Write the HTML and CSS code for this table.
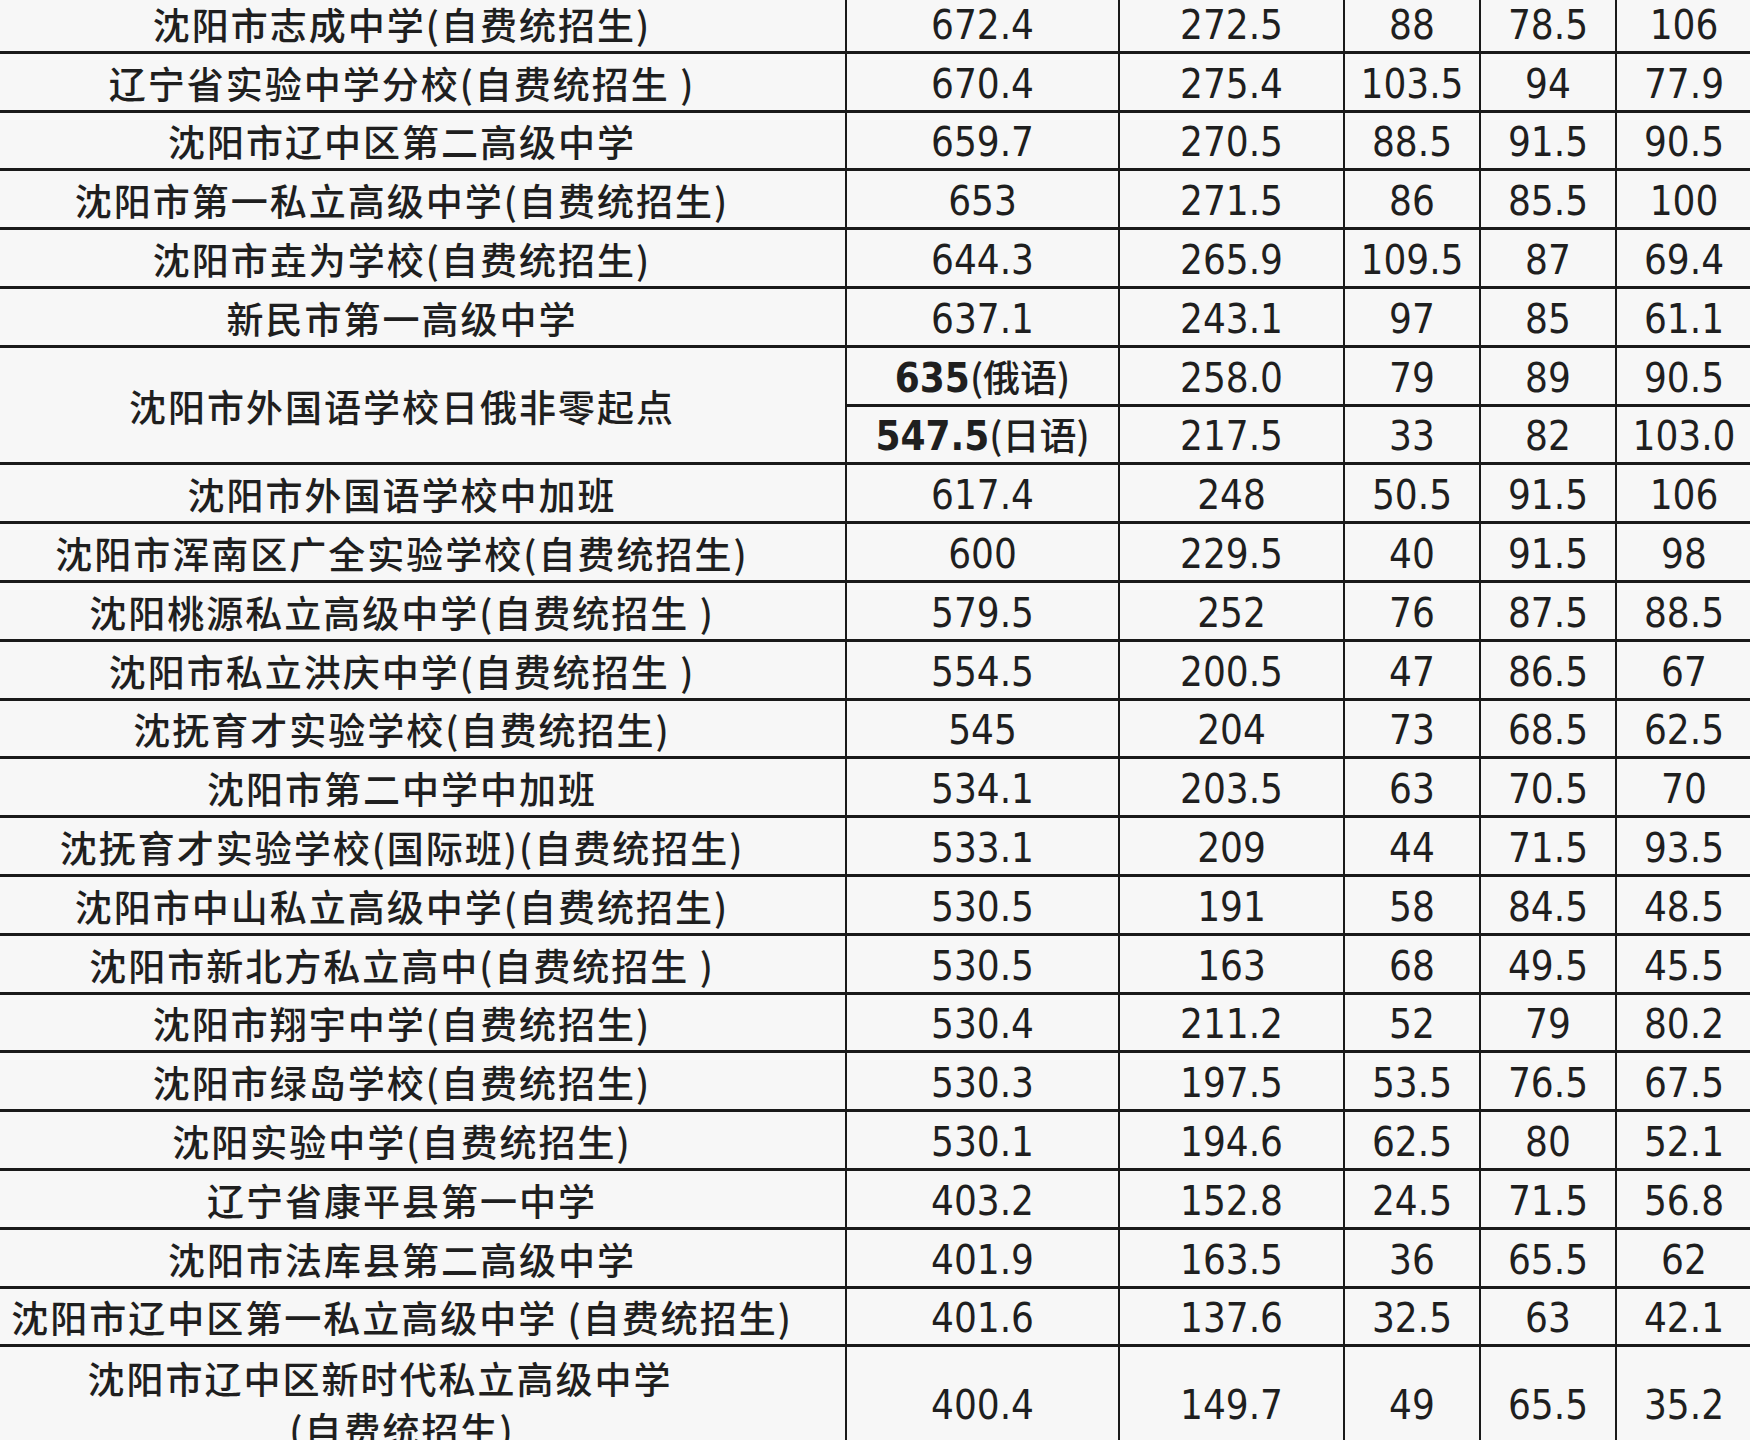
FILE: index.html
```html
<!DOCTYPE html>
<html lang="zh-CN">
<head>
<meta charset="utf-8">
<title>沈阳市高中录取分数</title>
<link rel="stylesheet" href="styles.css">
</head>
<body>
<table class="scores">
  <colgroup>
    <col class="c-name"><col class="c-total"><col class="c-a"><col class="c-b"><col class="c-c"><col class="c-d">
  </colgroup>
  <tbody>
    <tr><td class="name">沈阳市志成中学(自费统招生)</td><td>672.4</td><td>272.5</td><td>88</td><td>78.5</td><td>106</td></tr>
    <tr><td class="name">辽宁省实验中学分校(自费统招生 )</td><td>670.4</td><td>275.4</td><td>103.5</td><td>94</td><td>77.9</td></tr>
    <tr><td class="name">沈阳市辽中区第二高级中学</td><td>659.7</td><td>270.5</td><td>88.5</td><td>91.5</td><td>90.5</td></tr>
    <tr><td class="name">沈阳市第一私立高级中学(自费统招生)</td><td>653</td><td>271.5</td><td>86</td><td>85.5</td><td>100</td></tr>
    <tr><td class="name">沈阳市垚为学校(自费统招生)</td><td>644.3</td><td>265.9</td><td>109.5</td><td>87</td><td>69.4</td></tr>
    <tr><td class="name">新民市第一高级中学</td><td>637.1</td><td>243.1</td><td>97</td><td>85</td><td>61.1</td></tr>
    <tr><td class="name" rowspan="2">沈阳市外国语学校日俄非零起点</td><td><b class="strong">635</b><span class="lang">(俄语)</span></td><td>258.0</td><td>79</td><td>89</td><td>90.5</td></tr>
    <tr><td><b class="strong">547.5</b><span class="lang">(日语)</span></td><td>217.5</td><td>33</td><td>82</td><td>103.0</td></tr>
    <tr><td class="name">沈阳市外国语学校中加班</td><td>617.4</td><td>248</td><td>50.5</td><td>91.5</td><td>106</td></tr>
    <tr><td class="name">沈阳市浑南区广全实验学校(自费统招生)</td><td>600</td><td>229.5</td><td>40</td><td>91.5</td><td>98</td></tr>
    <tr><td class="name">沈阳桃源私立高级中学(自费统招生 )</td><td>579.5</td><td>252</td><td>76</td><td>87.5</td><td>88.5</td></tr>
    <tr><td class="name">沈阳市私立洪庆中学(自费统招生 )</td><td>554.5</td><td>200.5</td><td>47</td><td>86.5</td><td>67</td></tr>
    <tr><td class="name">沈抚育才实验学校(自费统招生)</td><td>545</td><td>204</td><td>73</td><td>68.5</td><td>62.5</td></tr>
    <tr><td class="name">沈阳市第二中学中加班</td><td>534.1</td><td>203.5</td><td>63</td><td>70.5</td><td>70</td></tr>
    <tr><td class="name">沈抚育才实验学校(国际班)(自费统招生)</td><td>533.1</td><td>209</td><td>44</td><td>71.5</td><td>93.5</td></tr>
    <tr><td class="name">沈阳市中山私立高级中学(自费统招生)</td><td>530.5</td><td>191</td><td>58</td><td>84.5</td><td>48.5</td></tr>
    <tr><td class="name">沈阳市新北方私立高中(自费统招生 )</td><td>530.5</td><td>163</td><td>68</td><td>49.5</td><td>45.5</td></tr>
    <tr><td class="name">沈阳市翔宇中学(自费统招生)</td><td>530.4</td><td>211.2</td><td>52</td><td>79</td><td>80.2</td></tr>
    <tr><td class="name">沈阳市绿岛学校(自费统招生)</td><td>530.3</td><td>197.5</td><td>53.5</td><td>76.5</td><td>67.5</td></tr>
    <tr><td class="name">沈阳实验中学(自费统招生)</td><td>530.1</td><td>194.6</td><td>62.5</td><td>80</td><td>52.1</td></tr>
    <tr><td class="name">辽宁省康平县第一中学</td><td>403.2</td><td>152.8</td><td>24.5</td><td>71.5</td><td>56.8</td></tr>
    <tr><td class="name">沈阳市法库县第二高级中学</td><td>401.9</td><td>163.5</td><td>36</td><td>65.5</td><td>62</td></tr>
    <tr><td class="name">沈阳市辽中区第一私立高级中学 (自费统招生)</td><td>401.6</td><td>137.6</td><td>32.5</td><td>63</td><td>42.1</td></tr>
    <tr class="tall"><td class="name"><span class="first-line">沈阳市辽中区新时代私立高级中学</span><br>(自费统招生)</td><td>400.4</td><td>149.7</td><td>49</td><td>65.5</td><td>35.2</td></tr>
  </tbody>
</table>
</body>
</html>
```
FILE: styles.css
```css
html, body {
  margin: 0;
  padding: 0;
  background: #f7f7f7;
  overflow: hidden;
}

body {
  width: 1750px;
  height: 1440px;
}

.scores {
  border-collapse: collapse;
  table-layout: fixed;
  width: 1794px;
  margin-left: -43px;
  margin-top: -8px;
  color: #1f1f1f;
  font-family: "DejaVu Sans Condensed", "Liberation Sans Narrow", "DejaVu Sans", sans-serif;
  font-stretch: condensed;
  font-size: 40px;
}

.c-name { width: 888px; }
.c-total { width: 273px; }
.c-a { width: 225px; }
.c-b { width: 136px; }
.c-c { width: 136px; }
.c-d { width: 136px; }

.scores tr {
  height: 58.8px;
}

.scores tr.tall {
  height: 114px;
}

.scores td {
  border-top: 3px solid #1a1a1a;
  border-bottom: 3px solid #1a1a1a;
  border-left: 2px solid #1a1a1a;
  border-right: 2px solid #1a1a1a;
  padding: 4px 0 0;
  text-align: center;
  vertical-align: middle;
  line-height: 1;
  white-space: nowrap;
}

.scores td.name {
  font-family: "Noto Sans CJK SC", "Noto Sans", sans-serif;
  font-stretch: normal;
  font-size: 37px;
  font-weight: 500;
  letter-spacing: 2px;
  line-height: 51px;
  white-space: normal;
  padding-top: 3px;
}

.first-line {
  margin-right: 44px;
}

.strong {
  font-weight: 700;
}

.lang {
  font-family: "Noto Sans CJK SC", "Noto Sans", sans-serif;
  font-stretch: normal;
  font-size: 37px;
  font-weight: 500;
}
```
